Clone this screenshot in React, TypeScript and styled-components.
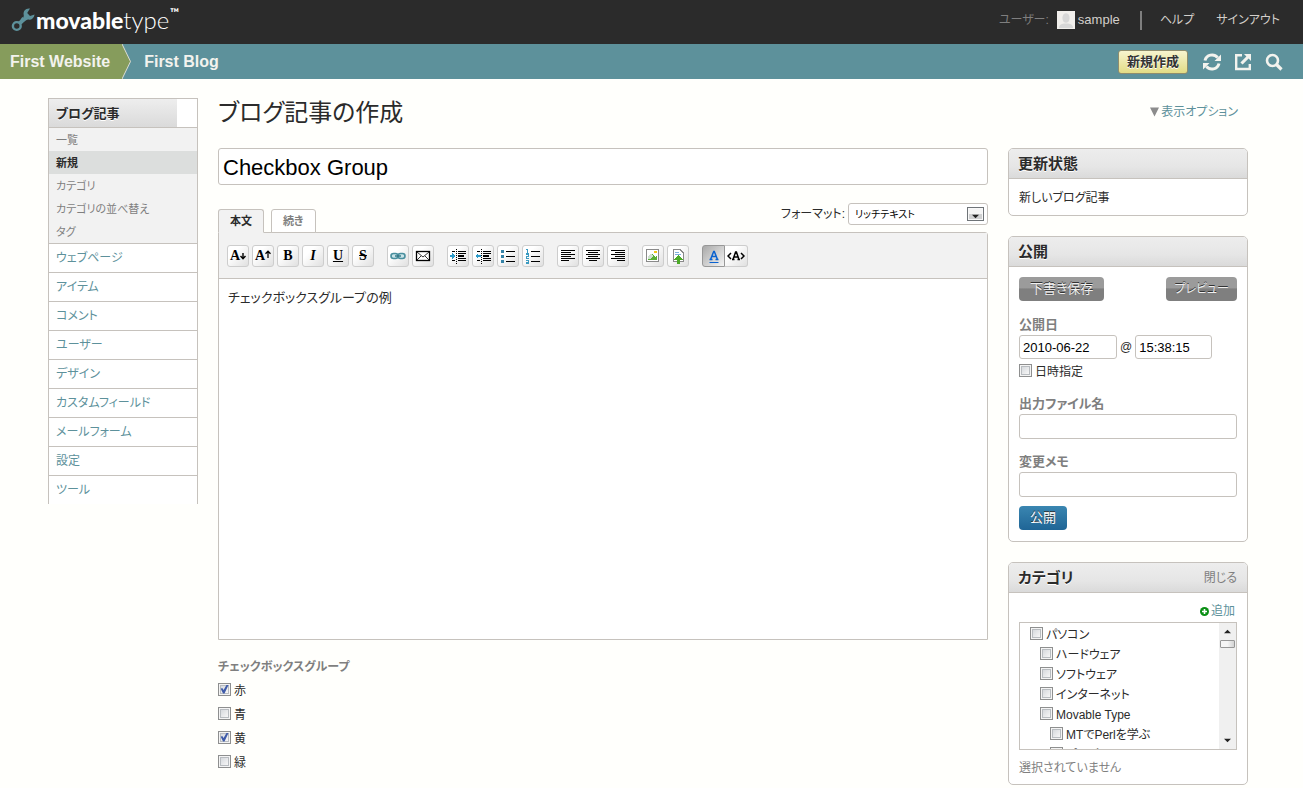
import React, { useState } from "react";
import styled, { createGlobalStyle, css } from "styled-components";

const c = {
  page: "#fffffc",
  ink: "#2b2b2b",
  teal: "#5d919b",
  green: "#869c5c",
  line: "#c6c2bd",
  grey: "#7f7f7f",
  panel: "#f2f2f2",
};

const GlobalStyle = createGlobalStyle`
  *, *::before, *::after { box-sizing: border-box; }
  body {
    margin: 0;
    background: ${c.page};
    color: ${c.ink};
    font-family: "Liberation Sans", "Noto Sans CJK JP", sans-serif;
    font-size: 12px;
    line-height: 16px;
    font-feature-settings: "palt";
  }
  button, input, select, textarea { font: inherit; font-feature-settings: inherit; color: inherit; margin: 0; }
  a { text-decoration: none; color: ${c.teal}; }
  ul { list-style: none; margin: 0; padding: 0; }
  h1, h2, p { margin: 0; }
`;

/* ---------- header ---------- */

const Header = styled.header`
  display: flex;
  align-items: center;
  justify-content: space-between;
  height: 44px;
  padding: 0 23px 4px 11px;
  background: ${c.ink};
`;

const Logo = styled.a`
  display: flex;
  align-items: center;
  gap: 1px;
  color: #fff;
  font-family: Lato, sans-serif;
  font-size: 23px;
  line-height: 24px;
`;

const LogoBold = styled.span`
  font-weight: 900;
`;

const LogoLight = styled.span`
  font-size: 24px;
  font-weight: 300;
`;

const Trademark = styled.sup`
  align-self: flex-start;
  font-size: 12px;
  font-weight: bold;
  line-height: 10px;
`;

const UserMenu = styled.nav`
  display: flex;
  align-items: center;
  font-size: 12px;
  line-height: 18px;
  color: ${c.grey};
  a { color: #d3cfca; }
`;

const UserLink = styled.a`
  display: flex;
  align-items: center;
  gap: 3px;
  margin-left: 8px;
  font-size: 13px;
`;

const Divider = styled.span`
  width: 2px;
  height: 19px;
  margin: 0 18px 0 20px;
  background: ${c.grey};
`;

const MenuLink = styled.a`
  & + & { margin-left: 22px; }
`;

/* ---------- breadcrumb bar ---------- */

const NavBar = styled.div`
  display: flex;
  align-items: center;
  height: 35px;
  padding-right: 19px;
  background: ${c.teal};
`;

const Crumb = styled.a`
  color: #f3f3ee;
  font-size: 16px;
  font-weight: bold;
  line-height: 35px;
`;

const SiteCrumb = styled(Crumb)`
  padding: 0 12px 0 10px;
  background: ${c.green};
`;

const CrumbArrow = styled.svg`
  display: block;
  margin-right: 13px;
`;

const NavActions = styled.div`
  display: flex;
  align-items: center;
  gap: 11px;
  margin-left: auto;
`;

const CreateButton = styled.button`
  height: 24px;
  padding: 0 8px;
  margin-right: 3px;
  border: 1px solid #8f8d6d;
  border-radius: 3px;
  background: linear-gradient(#f7f4cf, #e2dc85);
  color: #333;
  font-size: 13px;
  font-weight: bold;
  line-height: 22px;
  text-shadow: 0 1px 0 #fff;
`;

const IconButton = styled.button`
  display: flex;
  padding: 0;
  border: 0;
  background: none;
  color: #f3f3ee;
`;

/* ---------- page grid ---------- */

const Page = styled.div`
  display: grid;
  grid-template-columns: 150px minmax(0, 1fr) 240px;
  align-items: start;
  gap: 20px;
  padding: 19px 55px 0 48px;
`;

/* ---------- side menu ---------- */

const SideMenu = styled.nav`
  border: 1px solid ${c.line};
  border-bottom: 0;
  background: #fff;
`;

const SideHead = styled.div`
  height: 28px;
  padding-left: 7px;
  margin-right: 20px;
  background: linear-gradient(#eeeeee, #dadada);
  font-size: 13px;
  font-weight: bold;
  line-height: 30px;
  text-shadow: 0 1px 0 #fff;
`;

const SubList = styled.ul`
  border-top: 1px solid ${c.line};
  background: ${c.panel};
`;

const SubItem = styled.a<{ $active?: boolean }>`
  display: block;
  height: 23px;
  padding-left: 7px;
  color: ${(p) => (p.$active ? c.ink : c.grey)};
  font-size: 11px;
  font-weight: ${(p) => (p.$active ? "bold" : "normal")};
  line-height: 24px;
  background: ${(p) => (p.$active ? "#dcdedd" : "transparent")};
`;

const SideItem = styled.a`
  display: block;
  height: 29px;
  padding-left: 7px;
  border-top: 1px solid ${c.line};
  font-size: 12px;
  line-height: 29px;
`;

/* ---------- editor column ---------- */

const PageTitle = styled.h1`
  padding-top: 1px;
  margin-bottom: 21px;
  font-size: 24px;
  font-weight: normal;
  line-height: 28px;
`;

const inputBase = css`
  display: block;
  border: 1px solid ${c.line};
  border-radius: 3px;
  background: #fff;
  color: #000;
  outline: 0;
`;

const TitleInput = styled.input`
  ${inputBase}
  width: 100%;
  height: 37px;
  padding: 2px 4px 0;
  font-size: 22px;
`;

const EditorTop = styled.div`
  display: flex;
  justify-content: space-between;
  height: 29px;
  margin-top: 18px;
`;

const Tabs = styled.div`
  display: flex;
  align-items: flex-end;
  gap: 7px;
  margin-bottom: -1px;
`;

const Tab = styled.button<{ $active?: boolean }>`
  height: 24px;
  padding: 0 11px;
  border: 1px solid ${c.line};
  border-bottom-color: ${(p) => (p.$active ? c.panel : c.line)};
  border-radius: 3px 3px 0 0;
  background: ${(p) => (p.$active ? c.panel : "#fff")};
  color: ${(p) => (p.$active ? c.ink : c.grey)};
  font-size: 11px;
  font-weight: bold;
  line-height: 20px;
  z-index: 1;
`;

const FormatField = styled.div`
  display: flex;
  align-items: center;
  gap: 3px;
  height: 22px;
`;

const SelectWrap = styled.div`
  position: relative;
`;

const Select = styled.select`
  ${inputBase}
  appearance: none;
  width: 140px;
  height: 22px;
  padding: 1px 24px 0 6px;
  font-size: 10px;
`;

const SelectArrow = styled.span`
  position: absolute;
  top: 4px;
  right: 4px;
  display: flex;
  align-items: center;
  justify-content: center;
  width: 17px;
  height: 14px;
  padding-top: 4px;
  border: 1px solid #6f7478;
  background: linear-gradient(#f4f4f4 50%, #cfd0d1 50%);
  box-shadow: inset 0 0 0 1px #f8f8f8;
  pointer-events: none;
`;

const EditorBox = styled.div`
  border: 1px solid ${c.line};
  border-radius: 0 3px 0 0;
  background: #fff;
`;

const Toolbar = styled.div`
  display: flex;
  gap: 13px;
  height: 46px;
  padding: 12px 8px 0;
  border-bottom: 1px solid ${c.line};
  background: ${c.panel};
`;

const ToolGroup = styled.div<{ $joined?: boolean }>`
  display: flex;
  gap: ${(p) => (p.$joined ? 0 : 3)}px;
`;

const Tool = styled.button<{ $pressed?: boolean }>`
  display: flex;
  align-items: center;
  justify-content: center;
  width: 22px;
  height: 22px;
  padding: 0;
  border: 1px solid ${(p) => (p.$pressed ? "#989898" : "#cdcdcd")};
  border-radius: 3px;
  background: ${(p) =>
    p.$pressed ? "linear-gradient(135deg, #a9a9a9, #f4f4f4)" : "linear-gradient(135deg, #ffffff 30%, #e0e0e0)"};
  color: #000;
  ${ToolGroup}:last-child & {
    width: 23px;
    &:first-child { border-radius: 3px 0 0 3px; }
    &:last-child { border-left: 0; border-radius: 0 3px 3px 0; }
  }
`;

const Letter = styled.span<{ $kind?: "italic" | "underline" | "strike" }>`
  font-family: "Liberation Serif", serif;
  font-size: 14px;
  font-weight: bold;
  line-height: 20px;
  font-style: ${(p) => (p.$kind === "italic" ? "italic" : "normal")};
  text-decoration: ${(p) =>
    p.$kind === "underline" ? "underline" : p.$kind === "strike" ? "line-through" : "none"};
`;

const EditorText = styled.textarea`
  display: block;
  width: 100%;
  height: 360px;
  padding: 11px 9px;
  border: 0;
  outline: 0;
  resize: none;
  background: #fff;
  font-size: 13px;
`;

const CheckField = styled.fieldset`
  margin: 19px 0 0;
  padding: 0;
  border: 0;
`;

const Legend = styled.legend`
  padding: 0;
  margin-bottom: 2px;
  color: ${c.grey};
  font-size: 12px;
  font-weight: bold;
`;

const CheckLabel = styled.label<{ $level?: number; $height: number }>`
  display: flex;
  align-items: center;
  gap: 3px;
  height: ${(p) => p.$height}px;
  padding-left: ${(p) => (p.$level ?? 0) * 10}px;
  color: ${c.ink};
  white-space: nowrap;
  span { padding-top: 4px; }
`;

const CheckBox = styled.input`
  appearance: none;
  flex: none;
  width: 13px;
  height: 13px;
  border: 1px solid #8e8f8f;
  background: linear-gradient(135deg, #cdd1d6, #f6f6f6 80%);
  box-shadow: inset 0 0 0 1px #f4f4f4, inset 0 0 0 2px #b8bcc0;
  &::after {
    content: "";
    display: none;
    width: 9px;
    height: 9px;
    margin: 1px;
    background: #3f5ba9;
    clip-path: polygon(8% 48%, 25% 38%, 40% 62%, 75% 0, 97% 0, 50% 100%, 34% 100%);
  }
  &:checked::after { display: block; }
`;

/* ---------- right column ---------- */

const OptionLine = styled.div`
  display: flex;
  align-items: center;
  justify-content: flex-end;
  gap: 2px;
  margin-bottom: 22px;
  padding-right: 10px;
  line-height: 28px;
`;

const Widgets = styled.div`
  display: flex;
  flex-direction: column;
  gap: 20px;
`;

const Widget = styled.section`
  overflow: hidden;
  border: 1px solid ${c.line};
  border-radius: 5px;
  background: #fff;
`;

const WidgetHead = styled.header`
  display: flex;
  align-items: center;
  justify-content: space-between;
  height: 30px;
  padding: 0 10px 0 9px;
  border-bottom: 1px solid ${c.line};
  background: linear-gradient(#ededed, #e6e6e6 60%, #dadada);
  a { color: ${c.grey}; }
`;

const WidgetTitle = styled.h2`
  font-size: 15px;
  line-height: 29px;
  text-shadow: 0 1px 0 #fff;
`;

const WidgetBody = styled.div<{ $bottom?: number }>`
  padding: 10px 10px ${(p) => p.$bottom ?? 10}px;
`;

const Status = styled.p`
  height: 16px;
  line-height: 18px;
`;

const ButtonRow = styled.div`
  display: flex;
  justify-content: space-between;
  margin-bottom: 14px;
`;

const ActionButton = styled.button<{ $primary?: boolean; $small?: boolean }>`
  height: 24px;
  padding: 0 ${(p) => (p.$small ? 8 : 11)}px;
  border: 0;
  border-radius: 4px;
  background: ${(p) =>
    p.$primary ? "linear-gradient(#3a86b1, #1f6596)" : "linear-gradient(#9b9b9b 45%, #7f7f7f 50%)"};
  color: ${(p) => (p.$primary ? "#fff" : "#f0f0f0")};
  font-size: ${(p) => (p.$small ? 12 : 13)}px;
  line-height: 24px;
  text-shadow: 0 -1px 0 #333;
`;

const Field = styled.div`
  margin: 13px 0;
  &:has(+ button) { margin-bottom: 9px; }
`;

const FieldLabel = styled.label`
  display: block;
  color: ${c.grey};
  font-size: 13px;
  font-weight: bold;
  line-height: 20px;
`;

const TextInput = styled.input`
  ${inputBase}
  width: 100%;
  height: 25px;
  padding: 0 3px;
  font-size: 13px;
`;

const DateRow = styled.div`
  display: flex;
  align-items: center;
  gap: 3px;
`;

const DateInput = styled(TextInput)<{ $size: number }>`
  width: ${(p) => p.$size}px;
  height: 24px;
`;

const AddRow = styled.div`
  display: flex;
  justify-content: flex-end;
  margin: 0 2px 3px 0;
`;

const AddLink = styled.a`
  display: flex;
  align-items: center;
  gap: 2px;
`;

const CategoryBox = styled.div`
  display: flex;
  height: 128px;
  border: 1px solid ${c.line};
`;

const CategoryList = styled.ul`
  flex: 1;
  overflow: hidden;
  padding-left: 10px;
`;

const ScrollTrack = styled.div`
  display: flex;
  flex-direction: column;
  align-items: center;
  width: 17px;
  background: #f0f0f0;
`;

const ScrollArrow = styled.button`
  display: flex;
  align-items: center;
  justify-content: center;
  width: 17px;
  height: 17px;
  padding: 0;
  border: 0;
  background: none;
  &:last-child { margin-top: auto; }
`;

const ScrollThumb = styled.span`
  width: 15px;
  height: 8px;
  border: 1px solid #979797;
  border-radius: 1px;
  background: linear-gradient(90deg, #f5f5f5 50%, #d3d3d3);
`;

const Note = styled.p`
  margin-top: 10px;
  color: ${c.grey};
`;

/* ---------- drawings ---------- */

const Wrench = () => (
  <svg width="24" height="24" viewBox="0 0 24 24" aria-hidden="true">
    <circle cx="5.800" cy="18" r="3.900" fill="none" stroke={c.teal} strokeWidth="2.400" />
    <path d="M8.500 15.500C10.500 14 11.500 12.500 13 10" fill="none" stroke={c.teal} strokeWidth="4" />
    <path
      d="M19 0.600C14.500 0 11.800 3.500 12.800 7.400C12.600 9.500 11.600 11 10.600 12L12.600 14.600C13.800 13.400 15 12 17 11.600C20.500 12.300 23 10 23.600 6.400L19 7.900L16.200 5Z"
      fill={c.teal}
    />
  </svg>
);

const Avatar = () => (
  <svg width="18" height="18" aria-hidden="true">
    <rect width="18" height="18" fill="#f1efec" />
    <ellipse cx="9" cy="7" rx="3.600" ry="4.800" fill="#d7d7d7" />
    <path d="M2 17c0-3 2-4 5-4.500h4c3 .5 5 1.500 5 4.500z" fill="#d7d7d7" />
  </svg>
);

const RefreshIcon = () => (
  <svg width="20" height="20" viewBox="0 0 20 20" aria-hidden="true">
    <path d="M3 8.500A7.200 7.200 0 0 1 15.600 5.600M17 11.500A7.200 7.200 0 0 1 4.400 14.400" fill="none" stroke="currentColor" strokeWidth="3" />
    <path d="M19 2.500V9h-6.500zM1 17.500V11h6.500z" fill="currentColor" />
  </svg>
);

const ExternalIcon = () => (
  <svg width="20" height="20" viewBox="0 0 20 20" aria-hidden="true">
    <path d="M9 3.200H3.200V17H16.800V12" fill="none" stroke="currentColor" strokeWidth="2.400" />
    <path d="M11 2H18V9L15.600 6.600L9.600 12.600L7.400 10.400L13.400 4.400Z" fill="currentColor" />
  </svg>
);

const SearchIcon = () => (
  <svg width="20" height="20" viewBox="0 0 20 20" aria-hidden="true">
    <circle cx="8.500" cy="8.500" r="5.500" fill="none" stroke="currentColor" strokeWidth="2.600" />
    <path d="M12.500 12.500L17.500 17.500" stroke="currentColor" strokeWidth="3.200" />
  </svg>
);

const Triangle = ({ up }: { up?: boolean }) => (
  <svg width="7" height="7" viewBox="0 0 8 8" aria-hidden="true">
    <path d={up ? "M0 6L4 2L8 6Z" : "M0 2L4 6L8 2Z"} fill="#222" />
  </svg>
);

const OptionArrow = () => (
  <svg width="9" height="10" viewBox="0 0 9 10" aria-hidden="true">
    <path d="M0 0.500H9L4.500 9.500Z" fill="#8c8c8c" />
  </svg>
);

const Px = ({ children }: { children: React.ReactNode }) => (
  <svg width="18" height="18" viewBox="0 0 18 18" shapeRendering="crispEdges" aria-hidden="true">
    {children}
  </svg>
);

const SizeArrow = ({ up }: { up?: boolean }) => (
  <svg width="6" height="12" viewBox="0 0 6 12" aria-hidden="true">
    {up ? (
      <path d="M3 8V1M.5 3.800L3 1.200L5.500 3.800" fill="none" stroke="#000" strokeWidth="1.300" />
    ) : (
      <path d="M3 3V9M.5 6L3 8.700L5.500 6" fill="none" stroke="#000" strokeWidth="1.400" />
    )}
  </svg>
);

const LinkIcon = () => (
  <svg width="18" height="18" viewBox="0 0 18 18" aria-hidden="true">
    <rect x="2" y="6.500" width="7" height="5" rx="2.500" fill="#c9e3e8" stroke="#4a8f9e" strokeWidth="1.600" />
    <rect x="9" y="6.500" width="7" height="5" rx="2.500" fill="#c9e3e8" stroke="#4a8f9e" strokeWidth="1.600" />
    <path d="M6 9H12" stroke="#2f7383" strokeWidth="1.400" />
  </svg>
);

const MailIcon = () => (
  <svg width="18" height="18" viewBox="0 0 18 18" aria-hidden="true">
    <rect x="2.500" y="4.500" width="13" height="9" fill="#fff" stroke="#000" strokeWidth="1.300" />
    <path d="M3 5L9 10L15 5M3 13L7 9M15 13L11 9" fill="none" stroke="#000" strokeWidth=".8" />
  </svg>
);

const IndentIcon = ({ out }: { out?: boolean }) => (
  <Px>
    <path d="M3 4.500H6M9 4.500H17M3 13.500H6M9 13.500H17M9 11.500H17" stroke="#000" />
    <path d="M9 6.500H17" stroke="#000" />
    <path d="M9 9H15" stroke="#000" strokeWidth="2" />
    <path d="M7.500 2V17" stroke="#000" strokeDasharray="1 1" />
    <path d={out ? "M7 8H4V6L1 9L4 12V10H7Z" : "M1 8H3V6L6 9L3 12V10H1Z"} fill="#2c9ac9" />
  </Px>
);

const ListIcon = ({ numbered }: { numbered?: boolean }) => (
  <Px>
    <path d="M7 4.500H16M7 9.500H16M7 14.500H16" stroke="#000" />
    {numbered ? (
      <path
        d="M2 2.500H4M3.500 2V6M2 6.500H5M2 7.500H4.500V9.500H2.500V11.500H5M2 13.500H4.500V16.500H2M2 15H4"
        fill="none"
        stroke="#3b9ac0"
      />
    ) : (
      <path d="M2 3H5V6H2ZM2 8H5V11H2ZM2 13H5V16H2Z" fill="#3583a8" />
    )}
  </Px>
);

const AlignIcon = ({ side }: { side: "left" | "center" | "right" }) => {
  const widths = [14, 10, 14, 10, 14, 8];
  return (
    <Px>
      {widths.map((w, i) => (
        <rect
          key={i}
          x={side === "left" ? 2 : side === "right" ? 16 - w : 9 - w / 2}
          y={3 + i * 2}
          width={w}
          height="1"
          fill="#000"
        />
      ))}
    </Px>
  );
};

const ImageIcon = () => (
  <Px>
    <rect x="2.500" y="2.500" width="12" height="12" fill="#fff" stroke="#8a8a8a" />
    <path d="M4 12L8 7L11 10L13 8V13H4Z" fill="#5ab036" />
    <path d="M4 10L7 6L9 9L6 12H4Z" fill="#cfe0cf" />
    <rect x="10" y="4" width="3" height="2" fill="#f0c818" />
  </Px>
);

const FileIcon = () => (
  <Px>
    <path d="M4.500 2.500H11L14.500 6V14.500H4.500Z" fill="#fff" stroke="#8a8a8a" />
    <path d="M6 5.500H10M6 7.500H12" stroke="#7fb0dd" />
    <path d="M9.500 8L14 13H11V17H8V13H5Z" fill="#4cab27" />
  </Px>
);

const RichIcon = () => (
  <svg width="18" height="18" viewBox="0 0 18 18" aria-hidden="true">
    <path d="M5.500 12.500L8.700 4.500H9.300L12.500 12.500M6.500 9.500H11.500M4.500 12.500H7.500M10.500 12.500H13.500" fill="none" stroke="#0a62d0" strokeWidth="1.500" />
    <path d="M4.500 15.500H13.500" stroke="#0a62d0" />
  </svg>
);

const SourceIcon = () => (
  <svg width="18" height="18" viewBox="0 0 18 18" aria-hidden="true">
    <path d="M6 12.500L8.600 5H9.400L12 12.500M7 10H11M5 12.500H7.500M10.500 12.500H13" fill="none" stroke="#000" strokeWidth="1.500" />
    <path d="M4 6L1 9L4 12M14 6L17 9L14 12" fill="none" stroke="#000" strokeWidth="1.500" />
  </svg>
);

const PlusIcon = () => (
  <svg width="9" height="9" viewBox="0 0 9 9" aria-hidden="true">
    <circle cx="4.500" cy="4.500" r="4.500" fill="#0a8f14" />
    <path d="M4.500 2V7M2 4.500H7" stroke="#fff" strokeWidth="1.600" />
  </svg>
);

/* ---------- data ---------- */

const subItems = ["一覧", "新規", "カテゴリ", "カテゴリの並べ替え", "タグ"];
const sideItems = ["ウェブページ", "アイテム", "コメント", "ユーザー", "デザイン", "カスタムフィールド", "メールフォーム", "設定", "ツール"];
const colours: [string, boolean][] = [["赤", true], ["青", false], ["黄", true], ["緑", false]];
const categories: [string, number][] = [
  ["パソコン", 0],
  ["ハードウェア", 1],
  ["ソフトウェア", 1],
  ["インターネット", 1],
  ["Movable Type", 1],
  ["MTでPerlを学ぶ", 2],
  ["プラグイン", 2],
];

const tools: { name: string; icon: React.ReactNode; pressed?: boolean }[][] = [
  [
    { name: "縮小", icon: <><Letter>A</Letter><SizeArrow /></> },
    { name: "拡大", icon: <><Letter>A</Letter><SizeArrow up /></> },
    { name: "太字", icon: <Letter>B</Letter> },
    { name: "斜体", icon: <Letter $kind="italic">I</Letter> },
    { name: "下線", icon: <Letter $kind="underline">U</Letter> },
    { name: "取り消し線", icon: <Letter $kind="strike">S</Letter> },
  ],
  [
    { name: "リンク", icon: <LinkIcon /> },
    { name: "メール", icon: <MailIcon /> },
  ],
  [
    { name: "字下げ", icon: <IndentIcon /> },
    { name: "字下げ解除", icon: <IndentIcon out /> },
    { name: "リスト", icon: <ListIcon /> },
    { name: "番号リスト", icon: <ListIcon numbered /> },
  ],
  [
    { name: "左揃え", icon: <AlignIcon side="left" /> },
    { name: "中央揃え", icon: <AlignIcon side="center" /> },
    { name: "右揃え", icon: <AlignIcon side="right" /> },
  ],
  [
    { name: "画像", icon: <ImageIcon /> },
    { name: "ファイル", icon: <FileIcon /> },
  ],
  [
    { name: "リッチ", icon: <RichIcon />, pressed: true },
    { name: "ソース", icon: <SourceIcon /> },
  ],
];

export default function App() {
  const [title, setTitle] = useState("Checkbox Group");
  return (
    <>
      <GlobalStyle />
      <Header>
        <Logo href="#">
          <Wrench />
          <span>
            <LogoBold>movable</LogoBold>
            <LogoLight>type</LogoLight>
          </span>
          <Trademark>™</Trademark>
        </Logo>
        <UserMenu>
          <span>ユーザー:</span>
          <UserLink href="#">
            <Avatar />
            sample
          </UserLink>
          <Divider />
          <MenuLink href="#">ヘルプ</MenuLink>
          <MenuLink href="#">サインアウト</MenuLink>
        </UserMenu>
      </Header>

      <NavBar>
        <SiteCrumb href="#">First Website</SiteCrumb>
        <CrumbArrow width="9" height="35" viewBox="0 0 9 35" aria-hidden="true">
          <path d="M0 0L8.500 17.500L0 35Z" fill={c.green} />
          <path d="M0 0L8.500 17.500L0 35" fill="none" stroke="#dcdcd4" />
        </CrumbArrow>
        <Crumb href="#">First Blog</Crumb>
        <NavActions>
          <CreateButton>新規作成</CreateButton>
          <IconButton aria-label="再構築"><RefreshIcon /></IconButton>
          <IconButton aria-label="サイトの表示"><ExternalIcon /></IconButton>
          <IconButton aria-label="検索"><SearchIcon /></IconButton>
        </NavActions>
      </NavBar>

      <Page>
        <SideMenu>
          <SideHead>ブログ記事</SideHead>
          <SubList>
            {subItems.map((s) => (
              <li key={s}><SubItem href="#" $active={s === "新規"}>{s}</SubItem></li>
            ))}
          </SubList>
          <ul>
            {sideItems.map((s) => (
              <li key={s}><SideItem href="#">{s}</SideItem></li>
            ))}
          </ul>
        </SideMenu>

        <main>
          <PageTitle>ブログ記事の作成</PageTitle>
          <TitleInput aria-label="タイトル" value={title} onChange={(e) => setTitle(e.target.value)} />
          <EditorTop>
            <Tabs>
              <Tab $active>本文</Tab>
              <Tab>続き</Tab>
            </Tabs>
            <FormatField>
              <label htmlFor="format">フォーマット:</label>
              <SelectWrap>
                <Select id="format"><option>リッチテキスト</option></Select>
                <SelectArrow><Triangle /></SelectArrow>
              </SelectWrap>
            </FormatField>
          </EditorTop>
          <EditorBox>
            <Toolbar>
              {tools.map((group, i) => (
                <ToolGroup key={i} $joined={i === tools.length - 1}>
                  {group.map((t) => (
                    <Tool key={t.name} aria-label={t.name} $pressed={t.pressed}>{t.icon}</Tool>
                  ))}
                </ToolGroup>
              ))}
            </Toolbar>
            <EditorText aria-label="本文" defaultValue="チェックボックスグループの例" />
          </EditorBox>
          <CheckField>
            <Legend>チェックボックスグループ</Legend>
            {colours.map(([name, on]) => (
              <CheckLabel key={name} $height={24}>
                <CheckBox type="checkbox" defaultChecked={on} />
                <span>{name}</span>
              </CheckLabel>
            ))}
          </CheckField>
        </main>

        <aside>
          <OptionLine>
            <OptionArrow />
            <a href="#">表示オプション</a>
          </OptionLine>
          <Widgets>
            <Widget>
              <WidgetHead><WidgetTitle>更新状態</WidgetTitle></WidgetHead>
              <WidgetBody><Status>新しいブログ記事</Status></WidgetBody>
            </Widget>
            <Widget>
              <WidgetHead><WidgetTitle>公開</WidgetTitle></WidgetHead>
              <WidgetBody $bottom={11}>
                <ButtonRow>
                  <ActionButton>下書き保存</ActionButton>
                  <ActionButton $small>プレビュー</ActionButton>
                </ButtonRow>
                <Field>
                  <FieldLabel htmlFor="date">公開日</FieldLabel>
                  <DateRow>
                    <DateInput id="date" $size={98} defaultValue="2010-06-22" />
                    <span>@</span>
                    <DateInput aria-label="時刻" $size={77} defaultValue="15:38:15" />
                  </DateRow>
                  <CheckLabel $height={22}>
                    <CheckBox type="checkbox" />
                    <span>日時指定</span>
                  </CheckLabel>
                </Field>
                <Field>
                  <FieldLabel htmlFor="file">出力ファイル名</FieldLabel>
                  <TextInput id="file" />
                </Field>
                <Field>
                  <FieldLabel htmlFor="memo">変更メモ</FieldLabel>
                  <TextInput id="memo" />
                </Field>
                <ActionButton $primary>公開</ActionButton>
              </WidgetBody>
            </Widget>
            <Widget>
              <WidgetHead>
                <WidgetTitle>カテゴリ</WidgetTitle>
                <a href="#">閉じる</a>
              </WidgetHead>
              <WidgetBody $bottom={8}>
                <AddRow><AddLink href="#"><PlusIcon />追加</AddLink></AddRow>
                <CategoryBox>
                  <CategoryList>
                    {categories.map(([name, level]) => (
                      <li key={name}>
                        <CheckLabel $height={20} $level={level}>
                          <CheckBox type="checkbox" />
                          <span>{name}</span>
                        </CheckLabel>
                      </li>
                    ))}
                  </CategoryList>
                  <ScrollTrack>
                    <ScrollArrow aria-label="上へ"><Triangle up /></ScrollArrow>
                    <ScrollThumb />
                    <ScrollArrow aria-label="下へ"><Triangle /></ScrollArrow>
                  </ScrollTrack>
                </CategoryBox>
                <Note>選択されていません</Note>
              </WidgetBody>
            </Widget>
          </Widgets>
        </aside>
      </Page>
    </>
  );
}
